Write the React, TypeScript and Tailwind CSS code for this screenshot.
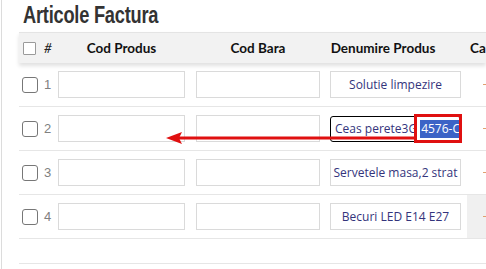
import React from 'react';

const rows = [
  { n: 1, name: 'Solutie limpezire' },
  { n: 2, name: '', focus: true },
  { n: 3, name: 'Servetele masa,2 strat' },
  { n: 4, name: 'Becuri LED E14 E27', hover: true },
];

const Box = ({ light }: { light?: boolean }) => (
  <span
    className={`inline-block ${light ? 'w-[13px] h-[13px] rounded-[1px] border-[#9a9a9a]' : 'w-[16px] h-[16px] rounded-[3px] border-[#777]'} border bg-white`}
  />
);

const App: React.FC = () => {
  return (
    <div className="relative w-[486px] h-[269px] overflow-hidden bg-white font-['Open_Sans',sans-serif]">
      <div className="absolute left-[1px] top-0 bottom-0 w-px bg-[#dcdcdc]" />

      <div className="pl-[19px]">
        {/* Title */}
        <div className="h-[32px] pl-[4px] pt-[1px]">
          <h1 className="inline-block origin-left scale-x-[0.76] text-[24px] leading-[28px] font-bold text-[#333] tracking-[-0.3px] font-['Liberation_Sans',sans-serif] whitespace-nowrap">
            Articole Factura
          </h1>
        </div>

        {/* Header */}
        <div className="border-t border-[#e4e4e4] bg-[#f2f2f2] h-[31px] flex items-center shadow-[0_3px_4px_rgba(0,0,0,0.12)] font-['Lato',sans-serif] text-[13.5px] font-bold text-[#111]">
          <div className="w-[39px] flex items-center pl-[4px] gap-[8px]">
            <Box light />
            <span className="italic font-normal text-[#222]">#</span>
          </div>
          <div className="w-[127px] text-center">Cod Produs</div>
          <div className="w-[11px]" />
          <div className="w-[124px] text-center">Cod Bara</div>
          <div className="w-[126px] text-center">Denumire Produs</div>
          <div className="pl-[24px]">Ca</div>
        </div>

        {/* Rows */}
        {rows.map((r) => (
          <div key={r.n} className="h-[44px] border-b border-[#e6e6e6] flex items-center">
            <div className="w-[39px] flex items-center pl-[3px] gap-[6px]">
              <Box />
              <span className="text-[13px] text-[#808080] font-['Liberation_Sans',sans-serif]">{r.n}</span>
            </div>
            <div className="w-[127px] h-[27px] border border-[#dadada] bg-white" />
            <div className="w-[11px]" />
            <div className="w-[124px] h-[27px] border border-[#dadada] bg-white" />
            <div className="w-[10px]" />
            {r.focus ? (
              <div className="w-[131px] h-[26px] border-[1.5px] border-black rounded-[3px] bg-white flex items-center pl-[4px] overflow-hidden whitespace-nowrap text-[12px] text-[#34347c]">
                <span>Ceas perete3G</span>
                <span className="ml-[3px] bg-[#3b63c6] text-white px-px">4576-C</span>
              </div>
            ) : (
              <div className="w-[131px] h-[27px] border border-[#dadada] bg-white flex items-center justify-center overflow-hidden whitespace-nowrap text-[12px] text-[#34347c]">
                {r.name}
              </div>
            )}
            <div className={`ml-[6px] flex-1 h-full flex items-center pl-[16px] ${r.hover ? 'bg-[#f0f0f0]' : ''}`}>
              <span className="w-[3px] h-px bg-[#e0a070]" />
            </div>
          </div>
        ))}
        <div className="h-[25px] border-b border-[#e6e6e6]" />
      </div>

      {/* Annotation */}
      <div className="absolute left-[414px] top-[114px] w-[48px] h-[29px] border-[3px] border-[#e01010]" />
      <svg className="absolute left-[160px] top-[130px]" width="256" height="16" viewBox="0 0 256 16">
        <line x1="254" y1="8" x2="14" y2="8" stroke="#e01010" strokeWidth="3" />
        <polygon points="6,8 22,2 19,8 22,14" fill="#e01010" />
      </svg>
    </div>
  );
};

export default App;
